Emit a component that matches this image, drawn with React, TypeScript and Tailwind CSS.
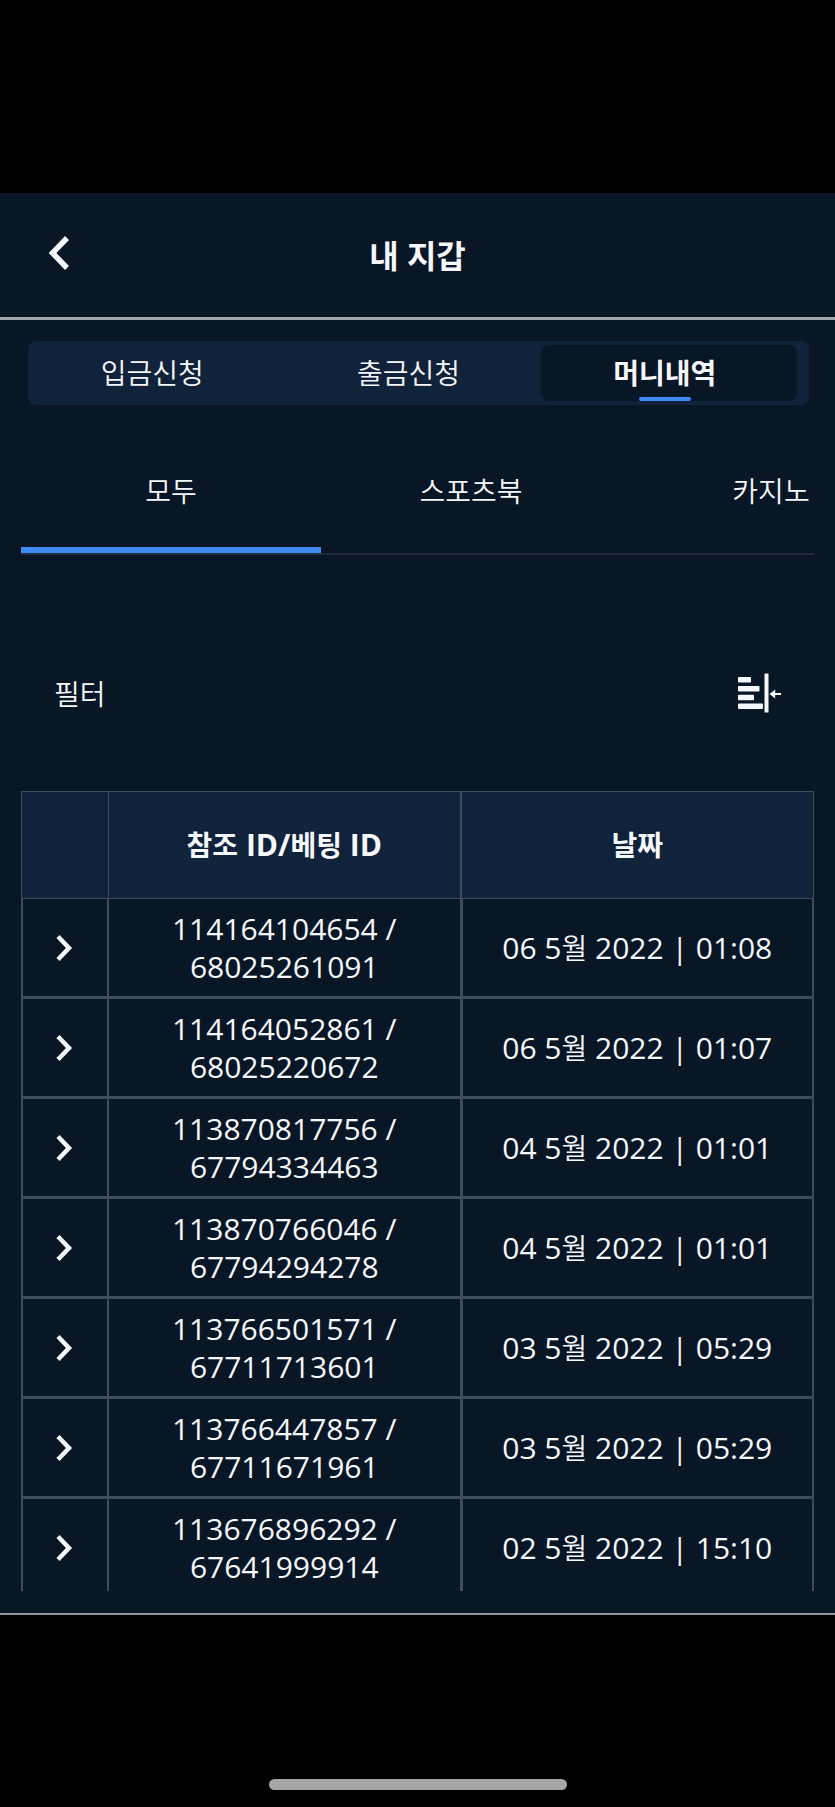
import React, { useState } from 'react';

interface Transaction {
  refId: string;
  betId: string;
  day: string;
  month: string;
  year: string;
  time: string;
}

const walletTabs = ['입금신청', '출금신청', '머니내역'];

const categories = ['모두', '스포츠북', '카지노'];

const transactions: Transaction[] = [
  { refId: '114164104654', betId: '68025261091', day: '06', month: '5월', year: '2022', time: '01:08' },
  { refId: '114164052861', betId: '68025220672', day: '06', month: '5월', year: '2022', time: '01:07' },
  { refId: '113870817756', betId: '67794334463', day: '04', month: '5월', year: '2022', time: '01:01' },
  { refId: '113870766046', betId: '67794294278', day: '04', month: '5월', year: '2022', time: '01:01' },
  { refId: '113766501571', betId: '67711713601', day: '03', month: '5월', year: '2022', time: '05:29' },
  { refId: '113766447857', betId: '67711671961', day: '03', month: '5월', year: '2022', time: '05:29' },
  { refId: '113676896292', betId: '67641999914', day: '02', month: '5월', year: '2022', time: '15:10' },
];

const BackIcon: React.FC = () => (
  <svg width="22" height="36" viewBox="0 0 22 36" fill="none" stroke="currentColor" strokeWidth="5.5" aria-hidden="true">
    <path d="M19 3L4.5 18L19 33" />
  </svg>
);

const ExpandIcon: React.FC = () => (
  <svg width="18" height="28" viewBox="0 0 18 28" fill="none" stroke="currentColor" strokeWidth="4.5" aria-hidden="true">
    <path d="M3 2.5L14 14L3 25.5" />
  </svg>
);

const FilterIcon: React.FC = () => (
  <svg width="43" height="40" viewBox="0 0 43 40" fill="currentColor" aria-hidden="true">
    <rect x="0" y="4" width="13" height="5.5" rx="0.8" />
    <rect x="0" y="13" width="21.5" height="5.5" rx="0.8" />
    <rect x="0" y="21.7" width="16" height="5.5" rx="0.8" />
    <rect x="0" y="30.4" width="25" height="5.5" rx="0.8" />
    <rect x="26.5" y="0.5" width="4" height="39" rx="0.6" />
    <path d="M31.5 21L37.2 16.6V20H43V22H37.2V25.4Z" />
  </svg>
);

const Header: React.FC = () => (
  <header className="relative flex h-[127px] items-center justify-center border-b-3 border-[#a0a7a8]">
    <button aria-label="뒤로" className="absolute left-12 top-[42px]">
      <BackIcon />
    </button>
    <h1 className="pt-0.5 text-[32px] leading-10 font-bold">내 지갑</h1>
  </header>
);

const WalletTabs: React.FC = () => {
  const [active, setActive] = useState(2);

  return (
    <nav className="mr-[26px] ml-7 mt-[21px] flex h-16 rounded-lg bg-[#11233a] py-1 pr-3">
      {walletTabs.map((tab, i) => (
        <button
          key={tab}
          onClick={() => setActive(i)}
          className={`relative flex-1 rounded-lg pr-2 text-[28px] leading-9 ${
            i === active ? 'bg-[#091626] font-bold' : 'font-[350]'
          }`}
        >
          {tab}
          {i === active && (
            <span className="absolute inset-x-0 bottom-0 flex justify-center pr-2">
              <span className="h-1 w-[52px] rounded-full bg-[#3e8bf8]" />
            </span>
          )}
        </button>
      ))}
    </nav>
  );
};

const CategoryTabs: React.FC = () => {
  const [active, setActive] = useState(0);

  return (
    <nav className="mt-[22px] flex overflow-hidden border-b-2 border-[#1f2b3c]">
      {categories.map((category, i) => (
        <button
          key={category}
          onClick={() => setActive(i)}
          className={`h-[126px] w-[300px] shrink-0 border-b-6 pt-2 text-[28px] leading-9 font-[350] ${
            i === active ? 'border-[#3e8bf8]' : 'border-transparent'
          }`}
        >
          {category}
        </button>
      ))}
    </nav>
  );
};

const TransactionRow: React.FC<{ transaction: Transaction }> = ({ transaction }) => {
  const { refId, betId, day, month, year, time } = transaction;

  return (
    <tr>
      <td className="border-x-2 border-b-3 border-[#3e4d5c] p-0">
        <button aria-label={`${refId} 상세`} className="flex w-full justify-center pr-0.5">
          <ExpandIcon />
        </button>
      </td>
      <td className="border-r-2 border-b-3 border-[#3e4d5c] px-12 pt-[11px] pb-[10px]">
        {refId} / {betId}
      </td>
      <td className="border-r-2 border-b-3 border-l border-[#3e4d5c] p-0">
        {day} {month.slice(0, -1)}
        <span className="text-[28px] font-[350]">{month.slice(-1)}</span> {year} | {time}
      </td>
    </tr>
  );
};

const TransactionTable: React.FC = () => (
  <div className="max-h-[800px] overflow-hidden">
    <table className="w-full table-fixed border-separate border-spacing-0 text-center text-[30px] leading-[38px]">
      <thead>
        <tr className="h-[108px] bg-[#11233a]">
          <th className="w-[88px] border border-[#3e4d5c]" aria-label="상세"></th>
          <th className="border-y border-r-2 border-[#3e4d5c] p-0 font-bold">
            <span className="text-[28px]">참조</span> ID/<span className="text-[28px]">베팅</span> ID
          </th>
          <th className="border-y border-r border-[#3e4d5c] p-0 text-[28px] font-bold">날짜</th>
        </tr>
      </thead>
      <tbody>
        {transactions.map(transaction => (
          <TransactionRow key={transaction.refId} transaction={transaction} />
        ))}
      </tbody>
    </table>
  </div>
);

const App: React.FC = () => {
  return (
    <div className="flex min-h-screen flex-col bg-black pt-[193px] font-['Open_Sans','Noto_Sans_CJK_KR',sans-serif] text-[#f5f7fa]">
      <div className="border-b-2 border-[#8f959b] bg-[#091626] pb-[22px]">
        <Header />
        <WalletTabs />
        <main className="px-[21px]">
          <CategoryTabs />
          <div className="flex h-[236px] items-center justify-between pt-10 pr-[33px] pl-[33px]">
            <span className="pt-0.5 text-[28px] leading-9 font-[350]">필터</span>
            <button aria-label="필터 열기">
              <FilterIcon />
            </button>
          </div>
          <TransactionTable />
        </main>
      </div>
      <div className="mx-auto mt-auto mb-[17px] h-[11px] w-[298px] rounded-full bg-[#a6a6a6]" />
    </div>
  );
};

export default App;
